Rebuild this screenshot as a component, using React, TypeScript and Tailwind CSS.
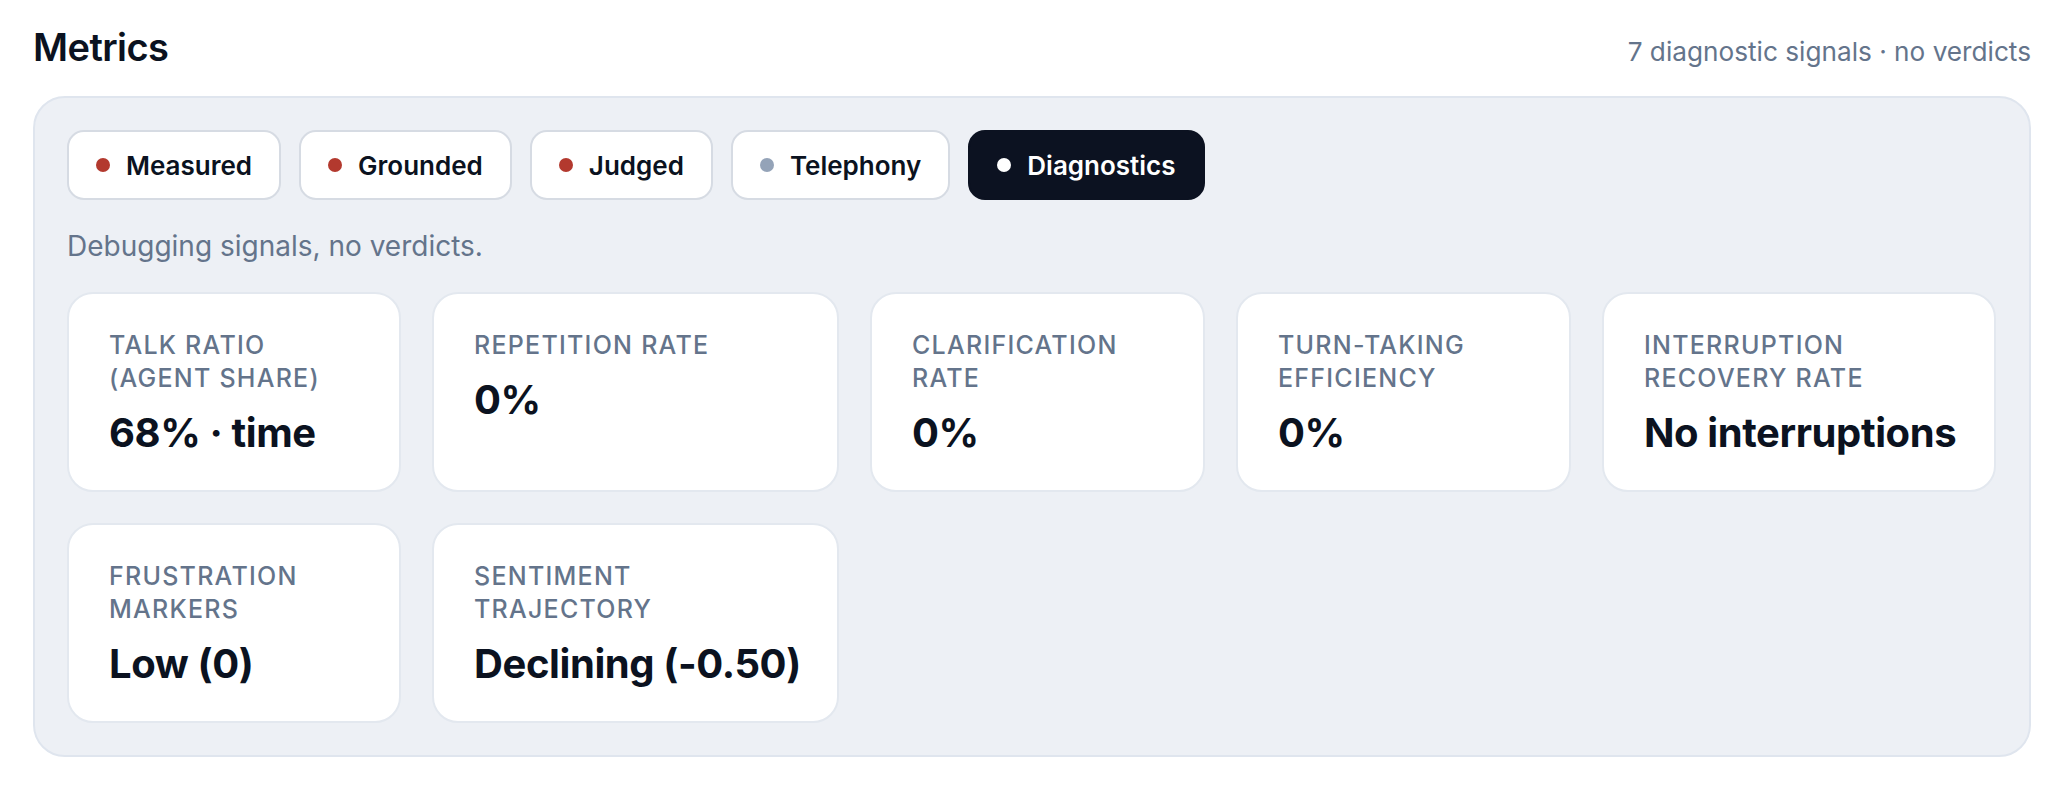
import React from 'react';

type Tab = { label: string; dot: string; active?: boolean };

const tabs: Tab[] = [
  { label: 'Measured', dot: 'bg-[#b3392e]' },
  { label: 'Grounded', dot: 'bg-[#b3392e]' },
  { label: 'Judged', dot: 'bg-[#b3392e]' },
  { label: 'Telephony', dot: 'bg-[#94a3b8]' },
  { label: 'Diagnostics', dot: 'bg-white', active: true },
];

const metrics = [
  { label: 'Talk ratio (agent share)', value: '68% · time' },
  { label: 'Repetition rate', value: '0%' },
  { label: 'Clarification rate', value: '0%' },
  { label: 'Turn-taking efficiency', value: '0%' },
  { label: 'Interruption recovery rate', value: 'No interruptions' },
  { label: 'Frustration markers', value: 'Low (0)' },
  { label: 'Sentiment trajectory', value: 'Declining (-0.50)' },
];

const MetricCard: React.FC<{ label: string; value: string }> = ({ label, value }) => (
  <div className="h-[200px] rounded-[26px] border-2 border-[#e3e8ef] bg-white px-[40px] pt-[35px]">
    <div className="text-[25px] leading-[33px] font-medium uppercase tracking-[0.05em] text-[#64748b]">
      {label}
    </div>
    <div className="mt-[14px] text-[40px] leading-[48px] font-bold tracking-[-0.01em] text-[#0b1220] whitespace-nowrap">
      {value}
    </div>
  </div>
);

export default function App() {
  return (
    <div className="min-h-screen bg-white px-[33px] pt-[23px] font-['Inter','Noto_Sans',sans-serif]">
      <div className="flex items-baseline justify-between">
        <h2 className="text-[38px] leading-[48px] font-semibold tracking-[-0.015em] text-[#0b1220]">Metrics</h2>
        <span className="text-[26.2px] text-[#64748b]">7 diagnostic signals · no verdicts</span>
      </div>

      <div className="mt-[25px] rounded-[32px] border-2 border-[#dfe5ee] bg-[#edf0f5] p-[32px]">
        <div className="flex gap-[18px]">
          {tabs.map((t) => (
            <button
              key={t.label}
              className={
                t.active
                  ? 'flex h-[70px] items-center gap-[16px] rounded-[17px] border-2 border-[#0c1221] bg-[#0c1221] px-[27px] text-[26px] font-semibold text-white'
                  : 'flex h-[70px] items-center gap-[16px] rounded-[17px] border-2 border-[#d6dbe3] bg-white px-[27px] text-[26px] font-semibold text-[#0b1220]'
              }
            >
              <span className={`h-[14px] w-[14px] rounded-full ${t.dot}`} />
              <span>{t.label}</span>
            </button>
          ))}
        </div>

        <p className="mt-[28px] text-[28px] leading-[36px] text-[#64748b]">Debugging signals, no verdicts.</p>

        <div className="mt-[28px] grid grid-cols-[334px_407px_335px_335px_394px] gap-x-[31px] gap-y-[31px]">
          {metrics.map((m) => (
            <MetricCard key={m.label} label={m.label} value={m.value} />
          ))}
        </div>
      </div>
    </div>
  );
}
